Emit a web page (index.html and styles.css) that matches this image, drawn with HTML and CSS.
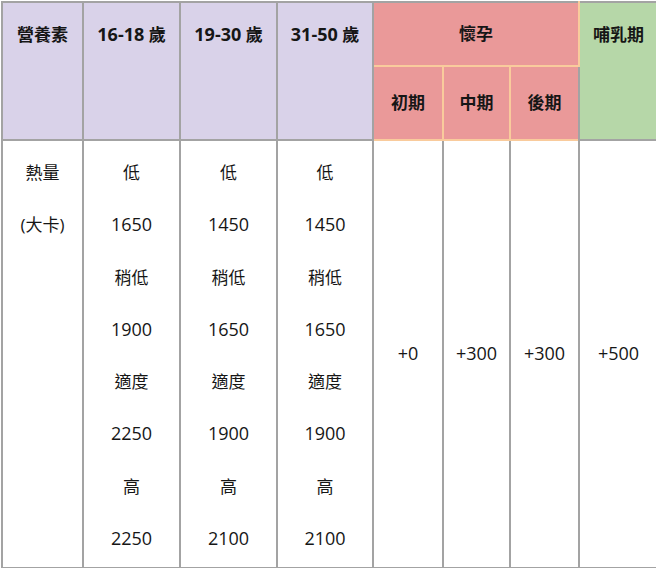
FILE: index.html
```html
<!DOCTYPE html>
<html lang="zh-Hant">
<head>
<meta charset="utf-8">
<title>營養素</title>
<link rel="stylesheet" href="styles.css">
</head>
<body>
<table class="nutri">
  <colgroup>
    <col class="c0"><col class="c1"><col class="c2"><col class="c3">
    <col class="c4"><col class="c5"><col class="c6"><col class="c7">
  </colgroup>
  <thead>
    <tr class="r1">
      <th rowspan="2" class="age">營養素</th>
      <th rowspan="2" class="age"><span class="n">16-18</span> 歲</th>
      <th rowspan="2" class="age"><span class="n">19-30</span> 歲</th>
      <th rowspan="2" class="age"><span class="n">31-50</span> 歲</th>
      <th colspan="3" class="preg">懷孕</th>
      <th rowspan="2" class="lact">哺乳期</th>
    </tr>
    <tr class="r2">
      <th class="preg sub">初期</th>
      <th class="preg sub">中期</th>
      <th class="preg sub">後期</th>
    </tr>
  </thead>
  <tbody>
    <tr class="body">
      <td class="list">熱量<br>(大卡)</td>
      <td class="list">低<br><span class="n">1650</span><br>稍低<br><span class="n">1900</span><br>適度<br><span class="n">2250</span><br>高<br><span class="n">2250</span></td>
      <td class="list">低<br><span class="n">1450</span><br>稍低<br><span class="n">1650</span><br>適度<br><span class="n">1900</span><br>高<br><span class="n">2100</span></td>
      <td class="list">低<br><span class="n">1450</span><br>稍低<br><span class="n">1650</span><br>適度<br><span class="n">1900</span><br>高<br><span class="n">2100</span></td>
      <td class="mid"><span class="n">+0</span></td>
      <td class="mid"><span class="n">+300</span></td>
      <td class="mid"><span class="n">+300</span></td>
      <td class="mid"><span class="n">+500</span></td>
    </tr>
  </tbody>
</table>
</body>
</html>
```
FILE: styles.css
```css
html, body {
  margin: 0;
  padding: 0;
  background: #ffffff;
  overflow: hidden;
}

.nutri {
  margin: 1px 0 0 1px;
  border-collapse: collapse;
  table-layout: fixed;
  width: 656px;
  font-family: "Open Sans", "Noto Sans CJK TC", sans-serif;
  font-size: 17px;
  color: #161616;
}

.c0 { width: 81px; }
.c1 { width: 97px; }
.c2 { width: 97px; }
.c3 { width: 96px; }
.c4 { width: 70px; }
.c5 { width: 67px; }
.c6 { width: 69px; }
.c7 { width: 79px; }

.nutri th,
.nutri td {
  border: 2px solid #a3a3a3;
  padding: 0;
  text-align: center;
  line-height: 24px;
}

.nutri th {
  font-weight: 700;
}

.nutri td {
  font-weight: 400;
}

.n {
  font-size: 18px;
  line-height: 1;
}

.r1 { height: 64px; }
.r2 { height: 74px; }

.nutri .age {
  background: #d9d2e9;
  vertical-align: top;
  padding-top: 20px;
}

.nutri .lact {
  background: #b6d7a8;
  vertical-align: top;
  padding-top: 20px;
}

.nutri th.preg {
  background: #ea9999;
  vertical-align: middle;
  border-color: #f9cb9c;
}

.nutri .r1 th.preg {
  border-top-color: #a3a3a3;
}

.nutri .list {
  vertical-align: top;
  line-height: 52.25px;
  padding: 6px 0 2px;
}

.nutri .mid {
  vertical-align: middle;
}
```
